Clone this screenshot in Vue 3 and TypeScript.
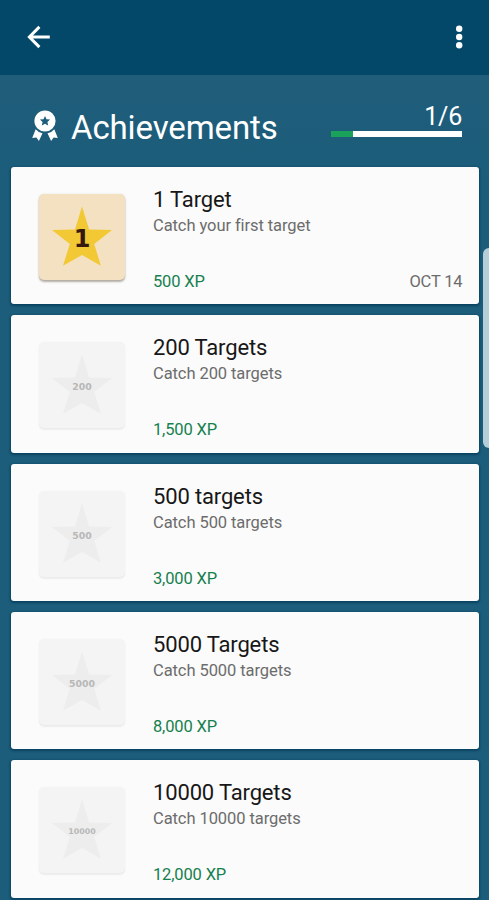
<script setup lang="ts">
interface Achievement {
  title: string
  description: string
  xp: string
  badge: string
  badgeSize: number
  date?: string
}

const achievements: Achievement[] = [
  { title: '1 Target', description: 'Catch your first target', xp: '500 XP', badge: '1', badgeSize: 24, date: 'OCT 14' },
  { title: '200 Targets', description: 'Catch 200 targets', xp: '1,500 XP', badge: '200', badgeSize: 9.3 },
  { title: '500 targets', description: 'Catch 500 targets', xp: '3,000 XP', badge: '500', badgeSize: 9.3 },
  { title: '5000 Targets', description: 'Catch 5000 targets', xp: '8,000 XP', badge: '5000', badgeSize: 9.3 },
  { title: '10000 Targets', description: 'Catch 10000 targets', xp: '12,000 XP', badge: '10000', badgeSize: 7.9 },
]
const earned = achievements.filter((a) => a.date).length
const total = 6
</script>

<template>
  <div class="screen">
    <header class="bar">
      <svg class="back" viewBox="0 0 24 24" fill="none" stroke="#fff" stroke-width="3">
        <path d="M22.8 12H3M12.4 1.9 2.4 12l10 10.1" />
      </svg>
      <svg class="more" viewBox="0 0 8 24" fill="#fff">
        <circle cx="4.2" cy="3.8" r="3.2" />
        <circle cx="4.2" cy="12" r="3.2" />
        <circle cx="4.2" cy="20.2" r="3.2" />
      </svg>
    </header>

    <section class="heading">
      <svg class="medal" viewBox="0 0 26 32" fill="#fff">
        <path d="M3.7 19.2 0.2 28.1 4.4 27.5 6.9 31 10.5 23.2Q6.2 22.4 3.7 19.2ZM22.3 19.2 25.8 28.1 21.6 27.5 19.1 31 15.5 23.2Q19.8 22.4 22.3 19.2Z" />
        <path fill-rule="evenodd" d="M13 .4a10.6 10.6 0 1 0 0 21.2A10.6 10.6 0 0 0 13 .4ZM13 5.9l1.5 3.3 3.6.4-2.7 2.4.8 3.6-3.2-1.8-3.2 1.8.8-3.6-2.7-2.4 3.6-.4Z" />
      </svg>
      <h1>Achievements</h1>
      <div class="progress">
        <span class="count">{{ earned }}/{{ total }}</span>
        <div class="track"><div class="fill" :style="{ width: (earned / total) * 100 + '%' }"></div></div>
      </div>
    </section>

    <main class="list">
      <article v-for="a in achievements" :key="a.title" class="card">
        <div class="tile" :class="{ locked: !a.date }">
          <svg viewBox="0 0 86 86">
            <polygon class="star" points="43,12.6 50.1,35.6 73,35.9 55.2,50 61.9,71.8 43,61 24,71.8 30.8,50 13,35.9 36,35.6" />
            <text class="num" x="43" :y="44.3 + a.badgeSize * 0.365" :font-size="a.badgeSize" text-anchor="middle">{{ a.badge }}</text>
          </svg>
        </div>
        <div class="info">
          <h2>{{ a.title }}</h2>
          <p>{{ a.description }}</p>
          <div class="meta">
            <span class="xp">{{ a.xp }}</span>
            <time v-if="a.date">{{ a.date }}</time>
          </div>
        </div>
      </article>
    </main>
    <div class="scrollbar"></div>
  </div>
</template>

<style>
body {
  overflow: hidden;
}
</style>

<style scoped>
.screen {
  position: relative;
  height: 900px;
  overflow: hidden;
  background: #1b5d7a;
  font-family: Roboto, sans-serif;
}
.bar {
  display: flex;
  justify-content: space-between;
  align-items: center;
  box-sizing: border-box;
  height: 75px;
  padding: 0 26px 2px 27px;
  background: #034869;
}
.back {
  width: 24px;
  height: 24px;
}
.more {
  width: 8px;
  height: 24px;
}
.heading {
  display: flex;
  align-items: flex-start;
  box-sizing: border-box;
  height: 92px;
  padding: 0 27px 0 32px;
  background: linear-gradient(#205d7b, #1b5d7a);
}
.medal {
  width: 26px;
  height: 32px;
  margin-top: 35px;
}
h1 {
  margin: 33px 0 0 13px;
  color: #fff;
  font-size: 33px;
  font-weight: 400;
  letter-spacing: -0.12px;
  line-height: 40px;
}
.progress {
  display: flex;
  flex-direction: column;
  align-items: flex-end;
  width: 131px;
  margin: 27px 0 0 auto;
}
.count {
  color: #fff;
  font-size: 25px;
  letter-spacing: -0.2px;
  line-height: 29px;
}
.track {
  width: 100%;
  height: 6px;
  background: #fff;
}
.fill {
  height: 100%;
  background: #19a35a;
}
.list {
  display: grid;
  grid-auto-rows: 137.4px;
  gap: 10.95px;
  padding: 0 10.5px 0 11px;
}
.card {
  display: flex;
  box-sizing: border-box;
  padding: 27px 16px 0 28px;
  border-radius: 3px;
  background: #fbfbfb;
  box-shadow: 0 1px 2px 1px rgba(0, 53, 84, 0.65);
}
.tile {
  flex: none;
  width: 86px;
  height: 86px;
  border-radius: 5px;
  background: #f3e1c1;
  box-shadow: 0 2px 2px rgba(70, 60, 40, 0.38), 0 0 2px rgba(90, 80, 60, 0.16);
}
.tile svg {
  display: block;
  width: 86px;
  height: 86px;
}
.star {
  fill: #f2c935;
}
.num {
  fill: #35190f;
  font-family: "DejaVu Sans", sans-serif;
  font-weight: 700;
}
.locked {
  background: #f4f4f4;
  box-shadow: 0 2px 2px rgba(0, 0, 0, 0.06), 0 0 2px rgba(0, 0, 0, 0.04);
}
.locked .star {
  fill: #ededed;
}
.locked .num {
  fill: #b7b7b7;
}
.info {
  display: flex;
  flex: 1;
  flex-direction: column;
  margin-left: 28px;
}
h2 {
  margin: -7px 0 0;
  color: #171717;
  font-size: 22px;
  font-weight: 400;
  letter-spacing: -0.15px;
  line-height: 26px;
}
p {
  margin: 2px 0 0;
  color: #6c6c6c;
  font-size: 16.5px;
  letter-spacing: -0.08px;
  line-height: 22px;
}
.meta {
  display: flex;
  justify-content: space-between;
  margin-top: 35px;
  color: #6c6c6c;
  font-size: 16.5px;
  letter-spacing: -0.15px;
  line-height: 20px;
}
.xp {
  color: #16804f;
}
.scrollbar {
  position: absolute;
  top: 248px;
  right: -6px;
  width: 12px;
  height: 200px;
  border-radius: 6px;
  background: #b5ced8;
}
</style>
